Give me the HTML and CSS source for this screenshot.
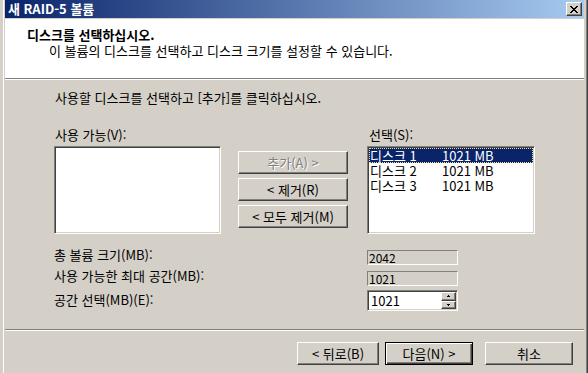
FILE: index.html
```html
<!DOCTYPE html>
<html lang="ko">
<head>
<meta charset="UTF-8">
<title>새 RAID-5 볼륨</title>
<link rel="stylesheet" href="styles.css">
</head>
<body>

<div class="window">
    <div class="titlebar">
        <span class="title">새 RAID-5 볼륨</span>
        <button class="close" type="button">
            <svg width="8" height="7" viewBox="0 0 8 7" shape-rendering="crispEdges">
                <path d="M0 0h2v1h-2z M6 0h2v1h-2z M1 1h2v1h-2z M5 1h2v1h-2z M2 2h4v1h-4z M3 3h2v1h-2z M2 4h4v1h-4z M1 5h2v1h-2z M5 5h2v1h-2z M0 6h2v1h-2z M6 6h2v1h-2z" fill="#000"/>
            </svg>
        </button>
    </div>

    <div class="header">
        <div class="header-title">디스크를 선택하십시오.</div>
        <div class="header-sub">이 볼륨의 디스크를 선택하고 디스크 크기를 설정할 수 있습니다.</div>
    </div>

    <div class="content">
        <p class="intro">사용할 디스크를 선택하고 [추가]를 클릭하십시오.</p>

        <div class="pickers">
            <div class="picker picker-left">
                <label>사용 가능(V):</label>
                <div class="listbox"></div>
            </div>
            <div class="moves">
                <button class="btn" type="button" disabled>추가(A) &gt;</button>
                <button class="btn" type="button">&lt; 제거(R)</button>
                <button class="btn" type="button">&lt; 모두 제거(M)</button>
            </div>
            <div class="picker picker-right">
                <label>선택(S):</label>
                <div class="listbox">
                    <div class="row selected"><span class="name">디스크 1</span><span>1021 MB</span></div>
                    <div class="row"><span class="name">디스크 2</span><span>1021 MB</span></div>
                    <div class="row"><span class="name">디스크 3</span><span>1021 MB</span></div>
                </div>
            </div>
        </div>

        <div class="sizes">
            <div class="size-row">
                <label>총 볼륨 크기(MB):</label>
                <div class="field">2042</div>
            </div>
            <div class="size-row row-2">
                <label>사용 가능한 최대 공간(MB):</label>
                <div class="field">1021</div>
            </div>
            <div class="size-row row-3">
                <label>공간 선택(MB)(E):</label>
                <div class="spin">
                    <span class="spin-text">1021</span>
                    <span class="spin-btns">
                        <span class="spin-btn">
                            <svg width="5" height="3" viewBox="0 0 5 3" shape-rendering="crispEdges"><path d="M2 0h1v1h-1z M1 1h3v1h-3z" fill="#000"/></svg>
                        </span>
                        <span class="spin-btn">
                            <svg width="5" height="3" viewBox="0 0 5 3" shape-rendering="crispEdges"><path d="M1 0h3v1h-3z M2 1h1v1h-1z" fill="#000"/></svg>
                        </span>
                    </span>
                </div>
            </div>
        </div>

        <div class="footer">
            <button class="btn back" type="button">&lt; 뒤로(B)</button>
            <button class="btn default next" type="button">다음(N) &gt;</button>
            <button class="btn cancel" type="button">취소</button>
        </div>
    </div>
</div>

</body>
</html>
```

FILE: styles.css
```css
* {
    box-sizing: border-box;
}
body {
    margin: 0;
    width: 588px;
    height: 373px;
    overflow: hidden;
    background-color: #d4d0c8;
    font-family: "Noto Sans CJK KR", sans-serif;
    font-size: 13px;
    color: #000;
}
.window {
    margin-left: 3px;
    width: 584px;
    height: 373px;
    padding: 0 2px 0 1px;
    border-left: 1px solid #fff;
    border-right: 1px solid #808080;
    box-shadow: 1px 0 0 #404040;
    background-color: #d4d0c8;
}
.titlebar {
    height: 18px;
    margin-bottom: 1px;
    padding: 0 2px 0 3px;
    display: flex;
    align-items: center;
    justify-content: space-between;
    background: linear-gradient(to right, #0a246a, #a6caf0);
    color: #fff;
    font-weight: bold;
    line-height: 16px;
}
.close {
    width: 16px;
    height: 14px;
    padding: 0;
    display: flex;
    align-items: center;
    justify-content: center;
    background-color: #d4d0c8;
    border: 1px solid;
    border-color: #fff #404040 #404040 #fff;
    box-shadow: inset -1px -1px #808080;
}
.header {
    height: 60px;
    padding: 8px 0 0 22px;
    background-color: #fff;
    border-bottom: 1px solid #808080;
    line-height: 16px;
}
.header-title {
    font-weight: bold;
}
.header-sub {
    padding-left: 22px;
}
.content {
    border-top: 1px solid #fff;
    padding-top: 10px;
}
.intro {
    margin: 0 0 21px 50px;
    line-height: 16px;
}
.pickers {
    display: flex;
    align-items: flex-start;
    padding-left: 49px;
}
.picker label {
    display: block;
    line-height: 16px;
    padding-left: 1px;
    margin-bottom: 3px;
}
.picker-left {
    width: 167px;
}
.picker-right {
    width: 168px;
    margin-left: 19px;
}
.picker-right label {
    padding-left: 2px;
}
.listbox {
    height: 88px;
    padding: 1px;
    background-color: #fff;
    border: 1px solid;
    border-color: #808080 #fff #fff #808080;
    box-shadow: inset 1px 1px #404040, inset -1px -1px #d4d0c8;
}
.row {
    display: flex;
    height: 15px;
    line-height: 15px;
}
.row .name {
    width: 73px;
    padding-left: 1px;
}
.row.selected {
    background-color: #0a246a;
    color: #fff;
    outline: 1px dotted #f5db95;
    outline-offset: -1px;
}
.moves {
    display: flex;
    flex-direction: column;
    gap: 4px;
    margin: 24px 0 0 17px;
}
.btn {
    height: 23px;
    padding: 0;
    font-family: inherit;
    font-size: 13px;
    color: #000;
    background-color: #d4d0c8;
    border: 1px solid;
    border-color: #fff #404040 #404040 #fff;
    box-shadow: inset -1px -1px #808080;
}
.moves .btn {
    width: 110px;
}
.btn:disabled {
    color: #808080;
    text-shadow: 1px 1px #fff;
}
.sizes {
    padding-left: 49px;
    margin-top: 16px;
}
.size-row {
    display: flex;
    align-items: flex-start;
}
.size-row label {
    width: 313px;
    line-height: 16px;
    margin-top: -3px;
}
.row-2 {
    margin-top: 6px;
}
.row-3 {
    margin-top: 4px;
}
.row-3 label {
    margin-top: 2px;
}
.field {
    width: 91px;
    height: 15px;
    padding-left: 1px;
    border: 1px solid;
    border-color: #808080 #fff #fff #808080;
    font-size: 12px;
    line-height: 13px;
}
.spin {
    width: 91px;
    height: 21px;
    padding: 1px;
    display: flex;
    background-color: #fff;
    border: 1px solid;
    border-color: #808080 #fff #fff #808080;
    box-shadow: inset 1px 1px #404040, inset -1px -1px #d4d0c8;
}
.spin-text {
    flex: 1;
    padding-left: 2px;
    line-height: 17px;
}
.spin-btns {
    width: 15px;
    display: flex;
    flex-direction: column;
}
.spin-btn {
    height: 9px;
    display: flex;
    align-items: center;
    justify-content: center;
    background-color: #d4d0c8;
    border: 1px solid;
    border-color: #fff #404040 #404040 #fff;
    box-shadow: inset -1px -1px #808080;
}
.spin-btn + .spin-btn {
    height: 8px;
}
.footer {
    margin-top: 18px;
    padding: 12px 11px 0 0;
    display: flex;
    justify-content: flex-end;
    border-top: 1px solid #808080;
    box-shadow: inset 0 1px #fff;
}
.back {
    width: 82px;
}
.next {
    width: 88px;
    margin-left: 6px;
}
.cancel {
    width: 88px;
    margin-left: 12px;
}
.btn.default {
    border: 1px solid #000;
    box-shadow: inset 1px 1px #fff, inset -1px -1px #404040, inset -2px -2px #808080;
}
```
